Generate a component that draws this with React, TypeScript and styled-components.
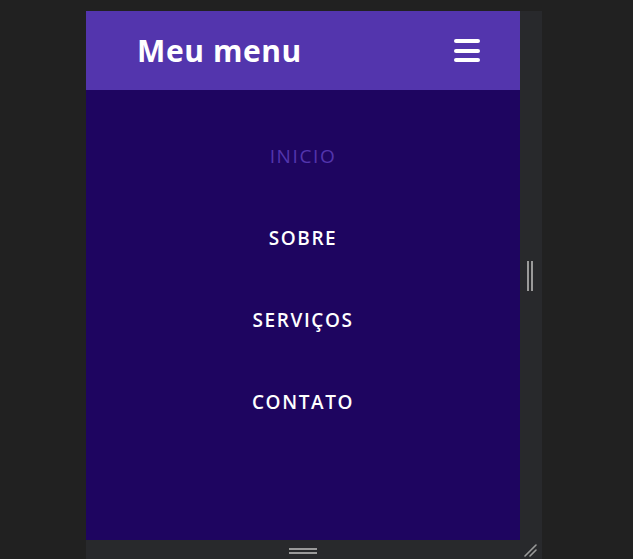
import React from "react";
import styled, { createGlobalStyle } from "styled-components";

const Global = createGlobalStyle`
  html, body { margin: 0; padding: 0; background: #212121; }
  body { font-family: "Open Sans", "Liberation Sans", sans-serif; }
`;

const Page = styled.div`
  width: 633px;
  height: 559px;
  padding: 11px 0 0 86px;
  box-sizing: border-box;
  overflow: hidden;
`;

const Frame = styled.div`
  display: grid;
  width: 456px;
  grid-template-columns: 434px 22px;
  grid-template-rows: 529px 19px;
  background: #28292c;
`;

const Viewport = styled.div`
  display: flex;
  flex-direction: column;
  background: #1e0560;
`;

const Header = styled.header`
  height: 79px;
  flex-shrink: 0;
  background: #5335ad;
  display: flex;
  align-items: center;
  justify-content: space-between;
  padding: 0 40px 0 51px;
`;

const Title = styled.h1`
  margin: 0;
  color: #ffffff;
  font-family: "Open Sans", sans-serif;
  font-weight: 700;
  font-size: 30px;
  letter-spacing: 0.6px;
`;

const Burger = styled.button`
  width: 26px;
  height: 23px;
  border: 0;
  padding: 0;
  background: transparent;
  display: flex;
  flex-direction: column;
  justify-content: space-between;
  cursor: pointer;
`;

const Bar = styled.span`
  display: block;
  height: 4px;
  border-radius: 2px;
  background: #ffffff;
`;

const Nav = styled.nav`
  display: flex;
  flex-direction: column;
  align-items: center;
  padding-top: 53px;
  gap: 55px;
`;

const Item = styled.a<{ $active?: boolean }>`
  color: ${(p) => (p.$active ? "#5335ad" : "#ffffff")};
  font-family: "Open Sans", sans-serif;
  font-weight: ${(p) => (p.$active ? 500 : 600)};
  font-size: 19px;
  line-height: 27px;
  letter-spacing: 1.6px;
  text-decoration: none;
`;

const SideBar = styled.div`
  display: flex;
  align-items: center;
  justify-content: center;
  padding-right: 3px;
`;

const VGrip = styled.div`
  width: 6px;
  height: 30px;
  box-sizing: border-box;
  border-left: 2px solid #9a9a9a;
  border-right: 2px solid #9a9a9a;
`;

const BottomBar = styled.div`
  display: flex;
  justify-content: center;
  padding-top: 8px;
`;

const HGrip = styled.div`
  width: 28px;
  height: 6px;
  box-sizing: border-box;
  border-top: 2px solid #9a9a9a;
  border-bottom: 2px solid #9a9a9a;
`;

const Corner = styled.div`
  display: flex;
  align-items: flex-end;
  justify-content: flex-start;
  padding: 0 0 2px 3px;
`;

export default function App() {
  return (
    <>
      <Global />
      <Page>
        <Frame>
          <Viewport>
            <Header>
              <Title>Meu menu</Title>
              <Burger aria-label="menu">
                <Bar />
                <Bar />
                <Bar />
              </Burger>
            </Header>
            <Nav>
              <Item $active href="#">INICIO</Item>
              <Item href="#">SOBRE</Item>
              <Item href="#">SERVIÇOS</Item>
              <Item href="#">CONTATO</Item>
            </Nav>
          </Viewport>
          <SideBar>
            <VGrip />
          </SideBar>
          <BottomBar>
            <HGrip />
          </BottomBar>
          <Corner>
            <svg width="14" height="14" viewBox="0 0 14 14">
              <path d="M2 13 L13 2 M7 13 L13 7" stroke="#9a9a9a" strokeWidth="1.6" strokeLinecap="round" />
            </svg>
          </Corner>
        </Frame>
      </Page>
    </>
  );
}
